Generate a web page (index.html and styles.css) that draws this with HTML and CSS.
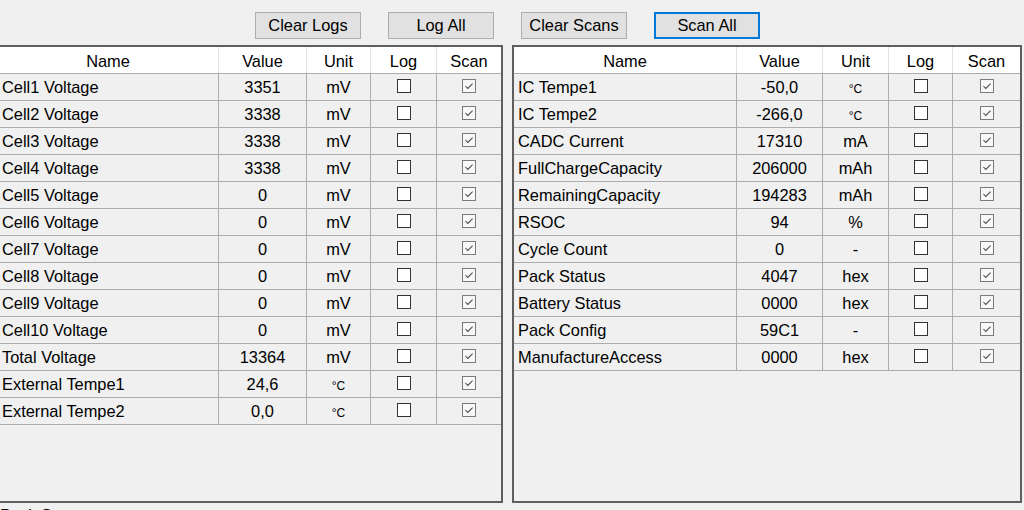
FILE: index.html
```html
<!DOCTYPE html>
<html>
<head>
<meta charset="utf-8">
<link rel="stylesheet" href="styles.css">
</head>
<body>
<div class="toolbar">
  <button class="btn">Clear Logs</button>
  <button class="btn">Log All</button>
  <button class="btn">Clear Scans</button>
  <button class="btn focus">Scan All</button>
</div>
<div class="panels">
  <div class="panel left">
    <div class="row head"><div class="c">Name</div><div class="c">Value</div><div class="c">Unit</div><div class="c">Log</div><div class="c">Scan</div></div>
    <div class="row"><div class="c n">Cell1 Voltage</div><div class="c">3351</div><div class="c">mV</div><div class="c"><span class="cb"></span></div><div class="c"><span class="cb on"><svg viewBox="0 0 14 14"><path d="M2.8 7 L5.6 9.8 L11.2 4.2"/></svg></span></div></div>
    <div class="row"><div class="c n">Cell2 Voltage</div><div class="c">3338</div><div class="c">mV</div><div class="c"><span class="cb"></span></div><div class="c"><span class="cb on"><svg viewBox="0 0 14 14"><path d="M2.8 7 L5.6 9.8 L11.2 4.2"/></svg></span></div></div>
    <div class="row"><div class="c n">Cell3 Voltage</div><div class="c">3338</div><div class="c">mV</div><div class="c"><span class="cb"></span></div><div class="c"><span class="cb on"><svg viewBox="0 0 14 14"><path d="M2.8 7 L5.6 9.8 L11.2 4.2"/></svg></span></div></div>
    <div class="row"><div class="c n">Cell4 Voltage</div><div class="c">3338</div><div class="c">mV</div><div class="c"><span class="cb"></span></div><div class="c"><span class="cb on"><svg viewBox="0 0 14 14"><path d="M2.8 7 L5.6 9.8 L11.2 4.2"/></svg></span></div></div>
    <div class="row"><div class="c n">Cell5 Voltage</div><div class="c">0</div><div class="c">mV</div><div class="c"><span class="cb"></span></div><div class="c"><span class="cb on"><svg viewBox="0 0 14 14"><path d="M2.8 7 L5.6 9.8 L11.2 4.2"/></svg></span></div></div>
    <div class="row"><div class="c n">Cell6 Voltage</div><div class="c">0</div><div class="c">mV</div><div class="c"><span class="cb"></span></div><div class="c"><span class="cb on"><svg viewBox="0 0 14 14"><path d="M2.8 7 L5.6 9.8 L11.2 4.2"/></svg></span></div></div>
    <div class="row"><div class="c n">Cell7 Voltage</div><div class="c">0</div><div class="c">mV</div><div class="c"><span class="cb"></span></div><div class="c"><span class="cb on"><svg viewBox="0 0 14 14"><path d="M2.8 7 L5.6 9.8 L11.2 4.2"/></svg></span></div></div>
    <div class="row"><div class="c n">Cell8 Voltage</div><div class="c">0</div><div class="c">mV</div><div class="c"><span class="cb"></span></div><div class="c"><span class="cb on"><svg viewBox="0 0 14 14"><path d="M2.8 7 L5.6 9.8 L11.2 4.2"/></svg></span></div></div>
    <div class="row"><div class="c n">Cell9 Voltage</div><div class="c">0</div><div class="c">mV</div><div class="c"><span class="cb"></span></div><div class="c"><span class="cb on"><svg viewBox="0 0 14 14"><path d="M2.8 7 L5.6 9.8 L11.2 4.2"/></svg></span></div></div>
    <div class="row"><div class="c n">Cell10 Voltage</div><div class="c">0</div><div class="c">mV</div><div class="c"><span class="cb"></span></div><div class="c"><span class="cb on"><svg viewBox="0 0 14 14"><path d="M2.8 7 L5.6 9.8 L11.2 4.2"/></svg></span></div></div>
    <div class="row"><div class="c n">Total Voltage</div><div class="c">13364</div><div class="c">mV</div><div class="c"><span class="cb"></span></div><div class="c"><span class="cb on"><svg viewBox="0 0 14 14"><path d="M2.8 7 L5.6 9.8 L11.2 4.2"/></svg></span></div></div>
    <div class="row"><div class="c n">External Tempe1</div><div class="c">24,6</div><div class="c sm">°C</div><div class="c"><span class="cb"></span></div><div class="c"><span class="cb on"><svg viewBox="0 0 14 14"><path d="M2.8 7 L5.6 9.8 L11.2 4.2"/></svg></span></div></div>
    <div class="row"><div class="c n">External Tempe2</div><div class="c">0,0</div><div class="c sm">°C</div><div class="c"><span class="cb"></span></div><div class="c"><span class="cb on"><svg viewBox="0 0 14 14"><path d="M2.8 7 L5.6 9.8 L11.2 4.2"/></svg></span></div></div>
  </div>
  <div class="panel right">
    <div class="row head"><div class="c">Name</div><div class="c">Value</div><div class="c">Unit</div><div class="c">Log</div><div class="c">Scan</div></div>
    <div class="row"><div class="c n">IC Tempe1</div><div class="c">-50,0</div><div class="c sm">°C</div><div class="c"><span class="cb"></span></div><div class="c"><span class="cb on"><svg viewBox="0 0 14 14"><path d="M2.8 7 L5.6 9.8 L11.2 4.2"/></svg></span></div></div>
    <div class="row"><div class="c n">IC Tempe2</div><div class="c">-266,0</div><div class="c sm">°C</div><div class="c"><span class="cb"></span></div><div class="c"><span class="cb on"><svg viewBox="0 0 14 14"><path d="M2.8 7 L5.6 9.8 L11.2 4.2"/></svg></span></div></div>
    <div class="row"><div class="c n">CADC Current</div><div class="c">17310</div><div class="c">mA</div><div class="c"><span class="cb"></span></div><div class="c"><span class="cb on"><svg viewBox="0 0 14 14"><path d="M2.8 7 L5.6 9.8 L11.2 4.2"/></svg></span></div></div>
    <div class="row"><div class="c n">FullChargeCapacity</div><div class="c">206000</div><div class="c">mAh</div><div class="c"><span class="cb"></span></div><div class="c"><span class="cb on"><svg viewBox="0 0 14 14"><path d="M2.8 7 L5.6 9.8 L11.2 4.2"/></svg></span></div></div>
    <div class="row"><div class="c n">RemainingCapacity</div><div class="c">194283</div><div class="c">mAh</div><div class="c"><span class="cb"></span></div><div class="c"><span class="cb on"><svg viewBox="0 0 14 14"><path d="M2.8 7 L5.6 9.8 L11.2 4.2"/></svg></span></div></div>
    <div class="row"><div class="c n">RSOC</div><div class="c">94</div><div class="c">%</div><div class="c"><span class="cb"></span></div><div class="c"><span class="cb on"><svg viewBox="0 0 14 14"><path d="M2.8 7 L5.6 9.8 L11.2 4.2"/></svg></span></div></div>
    <div class="row"><div class="c n">Cycle Count</div><div class="c">0</div><div class="c">-</div><div class="c"><span class="cb"></span></div><div class="c"><span class="cb on"><svg viewBox="0 0 14 14"><path d="M2.8 7 L5.6 9.8 L11.2 4.2"/></svg></span></div></div>
    <div class="row"><div class="c n">Pack Status</div><div class="c">4047</div><div class="c">hex</div><div class="c"><span class="cb"></span></div><div class="c"><span class="cb on"><svg viewBox="0 0 14 14"><path d="M2.8 7 L5.6 9.8 L11.2 4.2"/></svg></span></div></div>
    <div class="row"><div class="c n">Battery Status</div><div class="c">0000</div><div class="c">hex</div><div class="c"><span class="cb"></span></div><div class="c"><span class="cb on"><svg viewBox="0 0 14 14"><path d="M2.8 7 L5.6 9.8 L11.2 4.2"/></svg></span></div></div>
    <div class="row"><div class="c n">Pack Config</div><div class="c">59C1</div><div class="c">-</div><div class="c"><span class="cb"></span></div><div class="c"><span class="cb on"><svg viewBox="0 0 14 14"><path d="M2.8 7 L5.6 9.8 L11.2 4.2"/></svg></span></div></div>
    <div class="row"><div class="c n">ManufactureAccess</div><div class="c">0000</div><div class="c">hex</div><div class="c"><span class="cb"></span></div><div class="c"><span class="cb on"><svg viewBox="0 0 14 14"><path d="M2.8 7 L5.6 9.8 L11.2 4.2"/></svg></span></div></div>
  </div>
</div>
<div class="footer">Pack Status</div>
</body>
</html>
```
FILE: styles.css
```css
html, body {
  margin: 0;
  padding: 0;
  background: #f0f0f0;
  overflow: hidden;
  height: 510px;
}
body {
  font-family: "Liberation Sans", Arial, sans-serif;
  font-size: 16.4px;
  color: #000;
}
.toolbar {
  display: flex;
  gap: 27px;
  padding: 12px 0 0 255px;
  height: 27px;
}
.btn {
  box-sizing: border-box;
  width: 106px;
  height: 27px;
  background: #e1e1e1;
  border: 1px solid #adadad;
  font-family: inherit;
  font-size: 16.4px;
  color: #000;
  padding: 0;
  margin: 0;
}
.btn.focus {
  border: 2px solid #0078d7;
}
.panels {
  display: flex;
  gap: 9px;
  margin: 6px 0 0 -4px;
}
.panel {
  box-sizing: border-box;
  height: 458px;
  border: 2px solid #5f5f5f;
}
.left { width: 507px; }
.right { width: 510px; }
.row {
  display: grid;
  height: 27px;
  box-sizing: border-box;
  border-bottom: 1px solid #acacac;
  background: #f0f0f0;
}
.left .row { grid-template-columns: 221px 88px 64px 66px 64px; }
.right .row { grid-template-columns: 223px 86px 66px 64px 67px; }
.c {
  display: flex;
  align-items: center;
  justify-content: center;
  border-right: 1px solid #acacac;
  white-space: nowrap;
  overflow: hidden;
  box-sizing: border-box;
  padding-top: 1px;
}
.c:last-child { border-right: none; }
.c.n {
  justify-content: flex-start;
  padding-left: 4px;
}
.head {
  background: #fff;
}
.head .c {
  border-right-color: #e3e3e3;
  padding-top: 3px;
}
.c.sm {
  font-size: 12px;
  padding-top: 3px;
}
.cb {
  box-sizing: border-box;
  width: 14px;
  height: 14px;
  border: 1px solid #333;
  background: #fff;
  display: block;
  margin-top: -3px;
}
.cb.on {
  border-color: #7a7a7a;
  background: #f8f8f8;
}
.cb svg {
  display: block;
  width: 12px;
  height: 12px;
}
.cb path {
  fill: none;
  stroke: #4a4a4a;
  stroke-width: 1.2;
}
.footer {
  padding: 3px 0 0 0;
  line-height: 18px;
}
```
